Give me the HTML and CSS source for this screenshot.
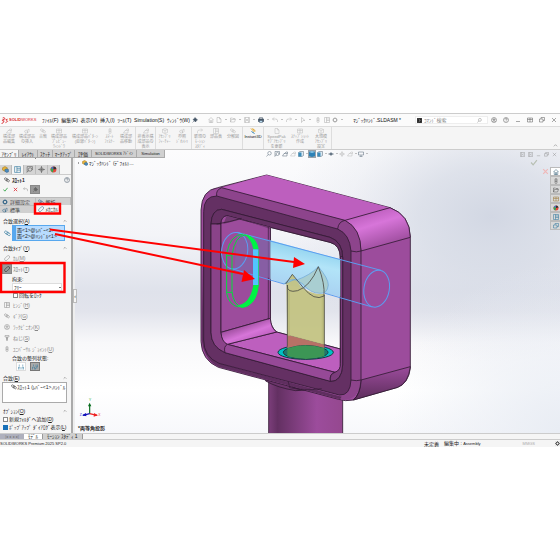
FILE: index.html
```html
<!DOCTYPE html>
<html lang="ja">
<head>
<meta charset="utf-8">
<title>SOLIDWORKS</title>
<link rel="stylesheet" href="styles.css">
</head>
<body>
<svg class="defs" aria-hidden="true">
  <symbol id="home" viewBox="0 0 12 12"><path d="M1 6l5-5 5 5M2.500 5v6h7V5M5 11V7h2v4"/></symbol>
  <symbol id="doc" viewBox="0 0 12 12"><path d="M2 1h5l3 3v7H2zM7 1v3h3"/></symbol>
  <symbol id="open" viewBox="0 0 12 12"><path d="M1 10V2h4l1 1h4v2M1 10l2-5h8l-2 5z"/></symbol>
  <symbol id="save" viewBox="0 0 12 12"><path d="M1 1h10v10H1zM3 1v4h6V1M3 11V7h6v4"/></symbol>
  <symbol id="print" viewBox="0 0 12 12"><path d="M3 4V1h6v3M1 4h10v5H1z"/><path d="M1 4h10v5H1z" fill="currentColor"/><path d="M3 7h6v4H3z" fill="#b9dcf0"/></symbol>
  <symbol id="undo" viewBox="0 0 12 12"><path d="M4 1L1 4l3 3M1 4h6q4 0 4 3v3"/></symbol>
  <symbol id="redo" viewBox="0 0 12 12"><path d="M8 1l3 3-3 3M11 4H5q-4 0-4 3v3"/></symbol>
  <symbol id="cursor" viewBox="0 0 12 12"><path d="M3 1l7 6H6l-3 4z"/></symbol>
  <symbol id="light" viewBox="0 0 12 12"><rect x="4" y="1" width="4" height="10" rx="2"/><path d="M4 4h4M4 7h4"/></symbol>
  <symbol id="list" viewBox="0 0 12 12"><path d="M1 1h10v10H1zM5 1v10M5 4h6M5 7h6"/></symbol>
  <symbol id="gear" viewBox="0 0 12 12"><circle cx="6" cy="6" r="3.500" stroke-width="2"/><path d="M6 0v3M6 9v3M0 6h3M9 6h3M2 2l2 2M8 8l2 2M10 2L8 4M4 8l-2 2"/></symbol>
  <symbol id="mag" viewBox="0 0 12 12"><circle cx="7" cy="4.500" r="3.500"/><path d="M4.500 7L1 11"/></symbol>
  <symbol id="magdoc" viewBox="0 0 12 12"><path d="M2 10V1h9v6"/><circle cx="7" cy="6" r="3"/><path d="M5 8l-4 3"/></symbol>
  <symbol id="part" viewBox="0 0 12 12"><path d="M1 10l3-5h6v5zM5 5l3-3h3v4"/></symbol>
  <symbol id="box" viewBox="0 0 12 12"><path d="M6 1l5 2v6l-5 2-5-2V3zM1 3l5 2 5-2M6 5v6"/></symbol>
  <symbol id="cube" viewBox="0 0 12 12"><path d="M6 0l6 2v8l-6 2-6-2V2z" fill="#2d82b7" stroke="none"/><path d="M6 0l6 2-6 2-6-2z" fill="#8cc7e8" stroke="none"/></symbol>
  <symbol id="cube2" viewBox="0 0 12 12"><path d="M1 3l3-2h7v8l-3 2H1z" fill="#dbe9f2"/><path d="M1 3h6v8H1z" fill="#3c8dbb" stroke="none"/></symbol>
  <symbol id="eye" viewBox="0 0 12 12"><path d="M1 6q5-5 10 0-5 5-10 0z"/><circle cx="6" cy="6" r="2" fill="currentColor"/></symbol>
  <symbol id="ball" viewBox="0 0 12 12"><circle cx="6" cy="6" r="5" fill="#e7473c" stroke="none"/><path d="M6 6V1a5 5 0 0 0-4.500 3z" fill="#3c79d0" stroke="none"/><path d="M6 6L1.500 4A5 5 0 0 0 5 11z" fill="#35a852" stroke="none"/><path d="M6 6l5-1a5 5 0 0 0-5-4z" fill="#333" stroke="none"/></symbol>
  <symbol id="screen" viewBox="0 0 12 12"><path d="M1 2h10v6H1zM6 8v3M3 11h6"/></symbol>
  <symbol id="screw" viewBox="0 0 12 12"><path d="M2 1h8v3H2zM5 4v7h2V4M4 6h4M4 8h4"/></symbol>
  <symbol id="asm" viewBox="0 0 12 12"><path d="M1 3l4-2 4 2v4L5 9 1 7z" fill="#e8b43a" stroke="#a57a1c"/><path d="M5 6l3-1 3 1v4l-3 1-3-2z" fill="#4a8dc0" stroke="#2f6390"/></symbol>
  <symbol id="clip" viewBox="0 0 12 12"><rect x="1" y="2.500" width="7" height="4" rx="2" transform="rotate(40 4 4)"/><rect x="4" y="5" width="7" height="4" rx="2" transform="rotate(40 8 7)"/></symbol>
  <symbol id="slot" viewBox="0 0 12 12"><rect x="0" y="3.500" width="12" height="5.500" rx="2.700" transform="rotate(-45 6 6)"/></symbol>
  <symbol id="cross" viewBox="0 0 12 12"><path d="M2 2l8 8M10 2l-8 8"/></symbol>
  <symbol id="tick" viewBox="0 0 12 12"><path d="M1 6l3.500 4L11 2"/></symbol>
  <symbol id="min" viewBox="0 0 12 12"><path d="M2 9h8"/></symbol>
  <symbol id="grid" viewBox="0 0 12 12"><path d="M1 2h10v8H1zM1 5h10M6 2v8"/></symbol>
  <symbol id="rest" viewBox="0 0 12 12"><path d="M1 4h7v6H1zM4 4V1h7v6H8"/></symbol>
  <symbol id="dock" viewBox="0 0 12 12"><path d="M1 1h10v10H1zM4 1v10M9 4L6 6l3 2"/></symbol>
  <symbol id="user" viewBox="0 0 12 12"><circle cx="6" cy="6" r="5"/><path d="M4 4h4v2H4zM3 9q3-3 6 0"/></symbol>
  <symbol id="help" viewBox="0 0 12 12"><circle cx="6" cy="6" r="5"/><path d="M4 5q0-2 2-2t2 1.500Q8 6 6 6.500V7M6 8.500v1"/></symbol>
  <symbol id="target" viewBox="0 0 12 12"><circle cx="6" cy="6" r="3"/><path d="M6 0v12M0 6h12"/></symbol>
  <symbol id="mate" viewBox="0 0 12 12"><path d="M1 6q4-4 6 0v4H3zM6 5l4-3v5l-3 3z"/></symbol>
  <symbol id="caret" viewBox="0 0 12 12"><path d="M2 8l4-4 4 4"/></symbol>
  <symbol id="pin" viewBox="0 0 12 12"><path d="M6 1l5 5-2 1-2 3-5-5 3-2z" fill="currentColor"/><path d="M4 8l-3 3"/></symbol>
  <symbol id="align" viewBox="0 0 12 12"><path d="M1 11V6h3v5M8 11V6h3v5M2.500 4V1M9.500 4V1"/></symbol>
  <symbol id="anti" viewBox="0 0 12 12"><path d="M1 11V6h4v5M8 1v5h3V1M3 4V1M7 11V8h4"/></symbol>
</svg>

<div class="app">
  <header class="title">
    <div class="logo"><svg viewBox="0 0 18 16"><path d="M4 1l5 2-2 3-4-1M2 8l5 1-3 5-3 1M15 5l-4 1 4 4-5 3"/></svg><b>SOLID</b>WORKS</div>
    <nav class="menu">
      <a href="#">ﾌｧｲﾙ(F)</a><a href="#">編集(E)</a><a href="#">表示(V)</a><a href="#">挿入(I)</a><a href="#">ﾂｰﾙ(T)</a><a href="#">Simulation(S)</a><a href="#">ｳｨﾝﾄﾞｳ(W)</a>
    </nav>
    <div class="quick">
      <button class="ink" aria-label="固定"><svg><use href="#pin"/></svg></button>
      <button aria-label="ホーム"><svg><use href="#home"/></svg></button>
      <button class="more" aria-label="新規"><svg><use href="#doc"/></svg></button>
      <button class="more" aria-label="開く"><svg><use href="#open"/></svg></button>
      <button class="more" aria-label="保存"><svg><use href="#save"/></svg></button>
      <button class="more ink" aria-label="印刷"><svg><use href="#print"/></svg></button>
      <button class="more" aria-label="元に戻す"><svg><use href="#undo"/></svg></button>
      <button class="more" aria-label="やり直し"><svg><use href="#redo"/></svg></button>
      <button class="more" aria-label="選択"><svg><use href="#cursor"/></svg></button>
      <button aria-label="再構築"><svg><use href="#light"/></svg></button>
      <button aria-label="プロパティ"><svg><use href="#list"/></svg></button>
      <button class="more" aria-label="オプション"><svg><use href="#gear"/></svg></button>
    </div>
    <div class="docname">ﾏｼﾞｯｸﾊﾝﾄﾞ.SLDASM *</div>
    <label class="search"><svg class="cmd" viewBox="0 0 12 12"><path d="M0 0h12v12H0z" fill="#222"/><path d="M4 3l4 3-4 3" stroke="#fff"/></svg><input type="text" placeholder="ｺﾏﾝﾄﾞ検索" aria-label="コマンド検索"><svg><use href="#mag"/></svg></label>
    <div class="winbtns">
      <button aria-label="ログイン"><svg><use href="#user"/></svg></button><button aria-label="ヘルプ"><svg><use href="#help"/></svg></button><button aria-label="最小化"><svg><use href="#min"/></svg></button><button aria-label="配置"><svg><use href="#grid"/></svg></button><button aria-label="元のサイズ"><svg><use href="#rest"/></svg></button><button aria-label="閉じる"><svg><use href="#cross"/></svg></button>
    </div>
  </header>

  <div class="ribbon">
    <button><svg><use href="#part"/></svg>構成部<br>品編集</button>
    <button><svg><use href="#mate"/></svg>構成部品<br>の挿入</button>
    <button><svg><use href="#clip"/></svg>合致</button>
    <button><svg><use href="#grid"/></svg>構成部品<br>ﾌﾟﾚﾋﾞｭｰ<br>ｳｨﾝﾄﾞｳ</button>
    <button><svg><use href="#grid"/></svg>構成部品ﾊﾟﾀｰﾝ<br>(直線ﾊﾟﾀｰﾝ)</button>
    <button><svg><use href="#light"/></svg>ｽﾏｰﾄ<br>ﾌｧｽﾅｰ</button>
    <button><svg><use href="#part"/></svg>構成部<br>品移動</button>
    <button class="sep"><svg><use href="#part"/></svg>非表示構<br>成部品の<br>表示</button>
    <button class="sep"><svg><use href="#box"/></svg>ｱｾﾝﾌﾞﾘ<br>ﾌｨｰﾁｬｰ</button>
    <button><svg><use href="#mate"/></svg>参照<br>ｼﾞｵﾒﾄﾘ</button>
    <button class="sep"><svg><use href="#redo"/></svg>新規の<br>ﾓｰｼｮﾝ<br>ｽﾀﾃﾞｨ</button>
    <button><svg><use href="#list"/></svg>部品表</button>
    <button><svg><use href="#clip"/></svg>分解図</button>
    <button class="sep on"><svg viewBox="0 0 12 12"><path d="M2 1l7 7M5 1l6 5" stroke="#e0a020" stroke-width="2"/><path d="M3 7l6 4" stroke="#2c7fae" stroke-width="2"/></svg>Instant3D</button>
    <button class="sep"><svg><use href="#doc"/></svg>SpeedPak<br>ｻﾌﾞｱｾﾝﾌﾞﾘ<br>を更新</button>
    <button><svg><use href="#grid"/></svg>ｽﾅｯﾌﾟｼｮｯﾄ<br>作成</button>
    <button><svg><use href="#box"/></svg>大規模<br>ｱｾﾝﾌﾞﾘ<br>設定</button>
    <span class="sep fold"><svg><use href="#caret"/></svg></span>
  </div>

  <main class="stage">
    <svg class="model" viewBox="0 0 1455 849" preserveAspectRatio="xMinYMin slice" aria-label="3D モデル">
      <defs>
        <linearGradient id="bg" x2="0" y2="1"><stop offset="0" stop-color="#fcfcfd"/><stop offset=".3" stop-color="#f3f4f8"/><stop offset=".5" stop-color="#dfe2eb"/><stop offset=".57" stop-color="#e2e4ec"/><stop offset=".68" stop-color="#f8f8fa"/><stop offset=".85" stop-color="#fff"/><stop offset="1" stop-color="#f7f8fb"/></linearGradient>
        <radialGradient id="haze" gradientUnits="userSpaceOnUse" cx="1250" cy="200" r="620" gradientTransform="translate(0 60) scale(1 .7)"><stop offset="0" stop-color="#d2d7e3"/><stop offset=".35" stop-color="#d5dae5" stop-opacity=".75"/><stop offset=".7" stop-color="#d8dce7" stop-opacity=".25"/><stop offset="1" stop-color="#d8dce7" stop-opacity="0"/></radialGradient>
        <radialGradient id="haze2" gradientUnits="userSpaceOnUse" cx="1455" cy="840" r="500"><stop offset="0" stop-color="#e9edf4"/><stop offset="1" stop-color="#e9edf4" stop-opacity="0"/></radialGradient>
        <linearGradient id="stem"><stop offset="0" stop-color="#7c3e7b"/><stop offset=".12" stop-color="#633062"/><stop offset=".65" stop-color="#9c4c9c"/><stop offset="1" stop-color="#95488f"/></linearGradient>
        <linearGradient id="cornerTop" gradientUnits="userSpaceOnUse" x1="870" y1="190" x2="905" y2="300"><stop offset="0" stop-color="#bd5fbe"/><stop offset=".35" stop-color="#d775d9"/><stop offset="1" stop-color="#9c4c9c"/></linearGradient>
        <linearGradient id="cornerBot" x2="0" y2="1"><stop offset="0" stop-color="#9c4c9c"/><stop offset="1" stop-color="#5c2d5b"/></linearGradient>
        <linearGradient id="floorCorner" gradientUnits="userSpaceOnUse" x1="510" y1="520" x2="530" y2="575"><stop offset="0" stop-color="#9c4c9c"/><stop offset=".55" stop-color="#d775d9"/><stop offset="1" stop-color="#bd5fbe"/></linearGradient>
        <linearGradient id="pinFill" gradientUnits="userSpaceOnUse" x1="700" y1="290" x2="675" y2="415"><stop offset="0" stop-color="#8fd2ee"/><stop offset=".4" stop-color="#b2e4f8"/><stop offset="1" stop-color="#a9d2f2"/></linearGradient>
      </defs>
      <path d="M0 0h1455v849H0z" fill="url(#bg)"/><path d="M0 0h1455v849H0z" fill="url(#haze)"/><path d="M0 0h1455v849H0z" fill="url(#haze2)"/>
      <g stroke="#321a34" stroke-width="2.500" stroke-linejoin="round">
        <path d="M581 680h222v175H581z" fill="url(#stem)"/>
        <path d="M572 675v18q35 20 90 29l70-4v-20z" fill="#6b346a"/>
        <path fill="#9c4c9c" fill-rule="evenodd" d="M378 180Q380 120 428 113L575 75 945 173Q1005 195 1006 262V655Q1000 700 968 712L835 750Q810 755 790 748L430 652Q380 630 378 575ZM586 232L765 277Q796 285 796 320V597L605 546Q586 530 586 505Z"/>
        <path fill="#bd5fbe" stroke="none" d="M440 113L575 75 945 173 810 211Z"/>
        <path fill="url(#cornerTop)" d="M810 211L945 173Q1005 195 1006 262L858 303Q855 240 810 211Z"/>
        <path fill="url(#cornerBot)" d="M858 690L1006 650Q1000 700 968 712L835 750Q858 730 858 690Z"/>
        <path fill="#8d448c" stroke="none" d="M440 113L810 211Q858 235 858 303V690Q855 750 800 750L790 740 828 690V303L790 237 425 138Q425 118 440 113Z"/>
        <path fill="none" d="M440 113L810 211Q858 235 858 303V690Q855 735 835 750M440 113Q422 120 425 138M810 211Q790 215 788 237M828 303Q845 308 858 303M828 690Q845 694 858 690"/>
        <path fill="#5f2e5f" stroke="none" d="M380 560L386 190V560Q392 620 432 640L800 740 795 748 430 650Q382 625 380 560Z"/>
        <path fill="#643063" fill-rule="evenodd" d="M386 185Q386 138 425 138L788 237Q824 252 828 303V690Q826 737 793 735L432 640Q386 620 386 570ZM408 222Q410 178 440 178L585 216 765 262Q803 275 803 325V645Q800 695 768 694L450 608Q408 590 408 547Z"/>
        <path fill="#643063" d="M408 222Q410 178 440 178L765 262Q803 275 803 325H796Q796 285 765 277L586 232 455 197Q438 205 438 222Z"/>
        <path fill="#8a4389" d="M408 222H438V547Q440 570 457 583L450 608Q408 590 408 547Z"/>
        <path fill="#9c4c9c" d="M438 222Q438 200 455 197L586 232V505L438 547Z"/>
        <path fill="#733a73" stroke="none" d="M455 197L586 232V237L500 208 445 222Z"/>
        <path fill="none" d="M425 222q40-6 75-17"/>
        <path fill="#bd5fbe" d="M457 583L605 546 796 597V650Q794 664 780 667Z"/>
        <path fill="url(#floorCorner)" d="M438 547L586 505Q588 535 605 546L457 583Q440 575 438 547Z"/>
        <path fill="#964997" d="M450 608Q445 590 457 583L780 667Q763 670 766 694Z"/>
        <path fill="#7c3c7c" d="M780 667Q798 660 796 640V320H803V645Q800 695 766 694 763 672 780 667Z"/>
        <path fill="none" d="M580 231V508M640 695l4 18 32 6M650 710q30 15 90 6" stroke-width="2"/>
      </g>
      <path fill="#7f67a8" opacity=".7" d="M487 247L586 270V385L478 360z"/>
      <path fill="url(#pinFill)" d="M586 271L796 328V440L750 430 627 402 586 387z"/>
      <ellipse cx="692" cy="607" rx="83" ry="21" fill="#00c1c4" stroke="#17393c" stroke-width="3"/>
      <ellipse cx="692" cy="607" rx="67" ry="19" fill="#20756c" stroke="#17393c" stroke-width="3"/>
      <path fill="#b77166" d="M637 555l111 29v10q-54-18-111 0z"/>
      <path fill="#3c9655" d="M637 595q54-18 111 0v24q-54 16-111 0z"/>
      <path fill="#c3c383" fill-opacity=".95" d="M634 402L652 373 678 410Q710 435 748 432V584L637 555Z"/>
      <path fill="#b5b576" d="M637 420h8v138h-8zM740 432h8v150h-8z" opacity=".6"/>
      <path fill="#a9ced1" stroke="#6ba6d8" stroke-width="2" d="M627 402Q640 385 665 390 705 376 730 350 760 385 760 405 757 432 735 430 705 430 684 402L660 388Z"/>
      <path fill="none" stroke="#4c4c45" stroke-width="2.500" d="M632 402L652 373 684 412Q718 455 747 438 750 400 730 350 705 410 668 422 635 430 637 405M637 405V590M748 435V590"/>
      <g fill="none" stroke="#5b9df0" stroke-width="3"><ellipse cx="479" cy="302" rx="39" ry="55" transform="rotate(8 479 302)"/><ellipse cx="905" cy="416" rx="38" ry="56" transform="rotate(10 905 416)"/><path d="M487 247L918 361M470 356L627 402M750 430L892 471"/></g>
      <g fill="none" stroke="#00df3b" stroke-width="3"><path d="M455 310Q466 253 505 252M455 310V430Q462 465 490 471"/><path d="M471 315Q480 257 510 255 546 260 550 310V405Q540 470 502 472 475 465 471 425ZM455 317h16M455 427h16"/></g>
      <path d="M506 253Q545 258 551 298H535Q530 267 506 253ZM535 405H551Q546 468 500 473L485 467Q525 463 535 405Z" fill="#00f344"/><path d="M534 298h16v107h-16z" fill="#52c4ff"/>
      <g stroke-width="3.500"><path d="M44 791V767" stroke="#076b1c"/><path d="M39 769l5-11 5 11z" fill="#076b1c"/><path d="M44 791l22 5" stroke="#e22"/><path d="M57 789l12 7-13 4z" fill="#e22"/><path d="M44 791l-20 5" stroke="#11b"/><path d="M33 789l-12 7 13 3z" fill="#11b"/></g>
      <g font-size="10" font-family="Liberation Sans, sans-serif"><text x="42" y="753" fill="#2a2">Y</text><text x="70" y="799" fill="#e33">X</text><text x="14" y="799" fill="#22c">Z</text></g>
    </svg>

    <div class="topbar">
      <div class="tabs"><button class="cur">ｱｾﾝﾌﾞﾘ</button><button>ﾚｲｱｳﾄ</button><button>ｽｹｯﾁ</button><button>ﾏｰｸｱｯﾌﾟ</button><button>評価</button><button class="latin">SOLIDWORKS ｱﾄﾞｲﾝ</button><button class="latin">Simulation</button></div>
      <div class="views">
        <button aria-label="ズーム"><svg><use href="#mag"/></svg></button><button aria-label="一部拡大"><svg><use href="#magdoc"/></svg></button><button aria-label="前の表示"><svg><use href="#part"/></svg></button><button class="dim" aria-label="断面"><svg><use href="#part"/></svg></button><button class="more" aria-label="表示方向"><svg><use href="#cube2"/></svg></button><button class="sel" aria-label="シェイディング"><svg><use href="#cube"/></svg></button><button class="more" aria-label="表示スタイル"><svg><use href="#cube2"/></svg></button><button class="more" aria-label="表示/非表示"><svg><use href="#eye"/></svg></button><button class="dim" aria-label="外観"><svg><use href="#target"/></svg></button><button class="more dim" aria-label="シーン"><svg><use href="#part"/></svg></button><button class="more" aria-label="画面"><svg><use href="#screen"/></svg></button>
      </div>
      <div class="docbtns"><button aria-label="左へ"><svg><use href="#dock"/></svg></button><button aria-label="右へ"><svg><use href="#dock"/></svg></button><button aria-label="最小化"><svg><use href="#min"/></svg></button><button aria-label="元のサイズ"><svg><use href="#rest"/></svg></button><button aria-label="閉じる"><svg><use href="#cross"/></svg></button></div>
    </div>

    <div class="work">
      <aside class="panel">
        <div class="grip"></div>
        <div class="ptabs"><button aria-label="ツリー"><svg><use href="#asm"/></svg></button><button class="cur" aria-label="プロパティ"><svg><use href="#list"/></svg></button><button aria-label="コンフィギュレーション"><svg><use href="#magdoc"/></svg></button><button aria-label="寸法"><svg><use href="#target"/></svg></button><button aria-label="表示"><svg><use href="#ball"/></svg></button></div>
        <div class="phead"><svg><use href="#clip"/></svg><b>ｽﾛｯﾄ1</b><button aria-label="ヘルプ"><svg><use href="#help"/></svg></button></div>
        <div class="acts"><button class="ok" aria-label="OK"><svg><use href="#tick"/></svg></button><button class="ng" aria-label="キャンセル"><svg><use href="#cross"/></svg></button><button class="dim" aria-label="元に戻す"><svg><use href="#undo"/></svg></button><button class="press" aria-label="固定"><svg><use href="#pin"/></svg></button></div>
        <div class="modes"><button><svg><use href="#gear"/></svg>詳細設定</button><button><svg><use href="#clip"/></svg>解析</button><button><svg><use href="#mate"/></svg>標準</button><button class="cur"><svg><use href="#slot"/></svg>ﾒｶﾆｶﾙ</button></div>
        <h2>合致選択(<u>A</u>)<svg><use href="#caret"/></svg></h2>
        <div class="pick"><svg><use href="#clip"/></svg><ul><li>面&lt;1&gt;@ﾚﾊﾞｰ&lt;1&gt;</li><li>面&lt;2&gt;@ﾊﾝﾄﾞﾙ&lt;1&gt;</li></ul></div>
        <h2>合致ﾀｲﾌﾟ(<u>Y</u>)<svg><use href="#caret"/></svg></h2>
        <button class="type"><svg><use href="#slot"/></svg>ｶﾑ(<u>M</u>)</button>
        <button class="type cur"><svg><use href="#slot"/></svg>ｽﾛｯﾄ(<u>T</u>)</button>
        <label class="lab" for="cons">拘束:</label>
        <select id="cons"><option>ﾌﾘｰ</option></select>
        <label class="chk in"><input type="checkbox">回転をﾛｯｸ</label>
        <button class="type"><svg><use href="#list"/></svg>ﾋﾝｼﾞ(<u>H</u>)</button>
        <button class="type"><svg><use href="#clip"/></svg>ｷﾞｱ(<u>G</u>)</button>
        <button class="type"><svg><use href="#user"/></svg>ﾗｯｸﾋﾟﾆｵﾝ(<u>K</u>)</button>
        <button class="type"><svg><use href="#screw"/></svg>ねじ(<u>S</u>)</button>
        <button class="type"><svg><use href="#light"/></svg>ﾕﾆﾊﾞｰｻﾙ ｼﾞｮｲﾝﾄ(<u>U</u>)</button>
        <div class="lab low">合致の整列状態:</div>
        <div class="aligns"><button aria-label="同方向"><svg><use href="#align"/></svg></button><button class="cur" aria-label="反対方向"><svg><use href="#anti"/></svg></button></div>
        <h2>合致(<u>E</u>)<svg><use href="#caret"/></svg></h2>
        <div class="mates"><svg><use href="#clip"/></svg>ｽﾛｯﾄ1 (ﾚﾊﾞｰ&lt;1&gt;,ﾊﾝﾄﾞﾙ</div>
        <h2>ｵﾌﾟｼｮﾝ(<u>O</u>)<svg><use href="#caret"/></svg></h2>
        <label class="chk"><input type="checkbox">新規ﾌｫﾙﾀﾞへ追加(<u>D</u>)</label>
        <label class="chk"><input type="checkbox" checked>ﾎﾟｯﾌﾟｱｯﾌﾟ ﾀﾞｲｱﾛｸﾞ表示(<u>L</u>)</label>
      </aside>
      <div class="split"><button aria-label="パネルを閉じる">‹</button></div>
      <div class="canvas">
        <div class="tree"><i></i><svg><use href="#asm"/></svg>ﾏｼﾞｯｸﾊﾝﾄﾞ (ﾃﾞﾌｫﾙﾄ...</div>
        <div class="viewname">*両等角投影</div>
      </div>
      <div class="confirm"><svg class="yes"><use href="#tick"/></svg><svg class="no"><use href="#cross"/></svg></div>
      <div class="tasks"><button aria-label="ホーム"><svg><use href="#home"/></svg></button><button aria-label="ライブラリ"><svg><use href="#light"/></svg></button><button aria-label="エクスプローラ"><svg><use href="#open"/></svg></button><button class="gold" aria-label="パレット"><svg><use href="#grid"/></svg></button><button aria-label="外観"><svg><use href="#ball"/></svg></button><button class="blue" aria-label="プロパティ"><svg><use href="#list"/></svg></button><button class="blue" aria-label="フォーラム"><svg><use href="#rest"/></svg></button></div>
    </div>

    <svg class="marks" viewBox="0 0 560 283" preserveAspectRatio="xMinYMin meet" aria-hidden="true">
      <path d="M50 79.500L294 112M55 84L243 124" stroke-width="2"/>
      <path d="M305 114L293 118 294 107zM255 129L241.500 132 244 120z" fill="#f00" stroke="none"/>
      <path d="M35 54h25v9.500H35zM1 113h63.500v29H1z" stroke-width="2.400"/>
    </svg>
  </main>

  <div class="sheets"><span class="nav">|◂ ◂ ▸ ▸|</span><button class="cur">ﾓﾃﾞﾙ</button><button>ﾓｰｼｮﾝ ｽﾀﾃﾞｨ 1</button></div>
  <footer class="status"><span class="ver">SOLIDWORKS Premium 2025 SP2.0</span><span>未定義</span><span>編集中 : <span class="latin">Assembly</span></span><span class="unit latin">MMGS</span><svg><use href="#gear"/></svg></footer>
</div>
</body>
</html>
```
FILE: styles.css
```css
* { box-sizing: border-box; }
body { margin: 0; padding-top: 113px; background: #fff; color: #222; font: 5px/6px "Liberation Sans", "Noto Sans CJK JP", sans-serif; }
.defs { display: none; }
svg { width: 7px; height: 7px; flex: none; fill: none; stroke: currentColor; stroke-width: 1; }
button, input, select { font: inherit; color: inherit; margin: 0; padding: 0; border: 0; background: none; }
button { display: flex; align-items: center; justify-content: center; white-space: nowrap; }
a { color: inherit; text-decoration: none; }
h2, ul { margin: 0; padding: 0; font: inherit; list-style: none; }
.latin { font-size: 4px; }
.app { border-top: 1px solid #ccc; overflow: hidden; white-space: nowrap; }

.title { display: flex; align-items: center; height: 12px; background: #fbfbfb; }
.logo { display: flex; align-items: center; width: 42px; padding-left: 1px; color: #d9292f; font-size: 4px; }
.logo svg { width: 8px; height: 7px; stroke-width: 2; }
.menu { display: flex; justify-content: space-between; width: 148px; color: #111; }
.quick { display: flex; margin-left: 2px; color: #aaa; }
.quick button { width: 9px; }
.quick button:first-child { width: 14px; justify-content: flex-start; }
.quick svg { width: 6px; height: 6px; }
.quick .ink { color: #456; }
.more::after { content: ""; width: 0; margin-left: 2px; border: 1px solid transparent; border-top-color: #888; }
.quick .more { width: 14px; padding-left: 1px; justify-content: flex-start; }
.quick .more::after { margin-left: 3px; }
.docname { margin-left: auto; margin-right: 14px; color: #111; }
.search { display: flex; align-items: center; width: 73px; height: 8px; padding: 0 5px 0 1px; background: #fff; border: 1px solid #eee; color: #777; }
.search input { flex: 1; min-width: 0; height: 6px; padding-left: 2px; outline: 0; }
.search input::placeholder { color: #888; }
.search svg { width: 5px; height: 5px; }
.winbtns { display: flex; color: #555; }
.winbtns button { width: 12px; }
.winbtns svg { width: 6px; height: 6px; }

.ribbon { display: grid; grid-template-columns: 18px 18px 14px 18px 34px 15px 18px 20px 18px 18px 17px 16px 18px 21px 26px 22px 20px 1fr; height: 24px; background: #f5f5f5; border-top: 1px solid #ddd; border-bottom: 1px solid #ccc; font-size: 4px; line-height: 5px; color: #999; }
.ribbon button { flex-direction: column; justify-content: flex-start; padding-top: 1px; text-align: center; }
.ribbon svg { width: 6px; height: 6px; color: #bbb; }
.ribbon .sep { border-left: 1px solid #ddd; }
.ribbon .on { color: #111; }
.fold { display: flex; justify-content: flex-end; align-items: flex-end; }
.ribbon .fold svg { width: 5px; height: 5px; margin: 1px 2px; color: #555; }

.stage { position: relative; }
.model { position: absolute; left: 75px; top: 0; width: calc(100% - 75px); height: 100%; stroke: none; }
.marks { position: absolute; left: 0; top: 0; width: 100%; height: 100%; stroke: #f00; pointer-events: none; }
.topbar { position: relative; display: flex; align-items: center; height: 8px; }
.tabs { display: grid; grid-template-columns: 19px 19px 15px 22px 17px 45px 28px; width: 265px; height: 8px; }
.tabs button { background: #d0d0d0; border: solid #aaa; border-width: 0 1px 1px 0; }
.tabs .cur { background: #f5f5f5; }
.views { display: flex; color: #567; }
.views button { width: 8px; height: 8px; }
.views svg { width: 6px; height: 6px; }
.views .more { width: 11px; }
.views .sel { background: #9aa3aa; }
.dim, .views .dim { color: #bbb; }
.docbtns { display: flex; margin-left: auto; margin-right: 2px; color: #888; }
.docbtns button { width: 8px; }
.docbtns svg { width: 5px; height: 5px; }

.work { position: relative; display: flex; }
.panel { width: 73px; padding-bottom: 2px; background: #f5f5f5; border-right: 2px solid #aaa; overflow: hidden; }
.grip { height: 7px; }
.grip::after { content: ""; display: block; width: 1px; height: 1px; margin: 0 auto; background: #888; }
.ptabs { display: flex; height: 10px; border-bottom: 1px solid #ccc; }
.ptabs button { width: 12px; background: #d4d4d4; border-right: 1px solid #bbb; color: #555; }
.ptabs .cur { background: #f5f5f5; color: #27739b; }
.phead { display: flex; align-items: center; height: 10px; padding: 0 1px 0 4px; gap: 2px; }
.phead button { margin-left: auto; color: #456; }
.phead svg { width: 6px; height: 6px; }
.acts { display: flex; height: 9px; margin-bottom: 3px; }
.acts button { width: 10px; }
.acts svg { width: 5px; height: 5px; stroke-width: 2; }
.ok { color: #27a03b; }
.ng { color: #e0313a; }
.press { background: #999; color: #666; border: 1px solid #888; }
.modes { display: grid; grid-template-columns: 1fr 1fr; grid-auto-rows: 8px; margin-bottom: 4px; color: #444; }
.modes button { justify-content: flex-start; padding-left: 2px; background: #d0d0d0; border: solid #bbb; border-width: 1px 1px 0 0; }
.modes svg { width: 6px; height: 6px; margin-right: 2px; color: #368; }
.modes .cur { background: #f5f5f5; border: 0; }
h2 { display: flex; align-items: center; height: 8px; padding: 0 4px 0 3px; }
h2 svg { width: 4px; height: 4px; margin-left: auto; }
.pick { display: flex; align-items: center; padding-left: 4px; margin-bottom: 3px; color: #27739b; }
.pick ul { width: 53px; height: 16px; margin-left: 1px; padding: 1px 0 0 1px; background: #b8dcff; border: 1px solid #58a8ee; border-left-width: 4px; color: #222; }
.type { justify-content: flex-start; height: 11px; padding-left: 3px; color: #888; }
.type svg { width: 8px; height: 8px; padding: 1px; margin-right: 2px; }
.type.cur { color: #666; }
.type.cur svg { background: #999; color: #222; outline: 1px solid #888; }
.lab { display: block; height: 9px; padding: 2px 0 0 12px; }
.low { height: 8px; padding-top: 1px; }
select { display: block; appearance: none; width: 50px; height: 8px; margin-left: 12px; padding-left: 1px; background: #fff linear-gradient(#777, #777) 46px 3px / 2px 1px no-repeat; border: 1px solid #ddd; }
.chk { display: flex; align-items: center; height: 8px; padding-left: 3px; }
.in { padding-left: 13px; }
input[type=checkbox] { appearance: none; width: 5px; height: 5px; margin-right: 1px; background: #fff; border: 1px solid #888; }
input[type=checkbox]:checked { background: #1770b8; border-color: #1770b8; }
.aligns { display: flex; gap: 4px; height: 9px; margin: 0 0 3px 16px; color: #27739b; }
.aligns button { width: 10px; border: 1px solid #ddd; background: #fff; }
.aligns .cur { background: #aaa; border-color: #777; }
.aligns svg { width: 6px; height: 6px; }
.mates { display: flex; height: 21px; margin: 0 4px 4px 2px; padding: 1px 0 0 8px; background: #fff; border: 1px solid #aaa; overflow: hidden; }
.mates svg { width: 6px; height: 6px; }
.split { display: flex; align-items: center; width: 5px; background: linear-gradient(90deg, #eee 2px, transparent 2px); }
.split button { width: 4px; height: 14px; background: #f5f5f5; border: 1px solid #bbb; }
.canvas { flex: 1; display: flex; flex-direction: column; justify-content: space-between; padding: 1px 0 0; }
.tree { display: flex; align-items: center; height: 8px; }
.tree svg { width: 6px; height: 6px; margin-right: 1px; }
.tree i { width: 4px; }
.tree i::after { content: ""; display: block; border: 1px solid transparent; border-left-color: #444; width: 0; }
.viewname { font-weight: bold; height: 8px; }
.confirm { display: flex; padding-top: 1px; }
.confirm svg { stroke-width: 2; }
.yes { color: #b7bfb2; width: 8px; margin-right: 4px; }
.no { color: #efb8b8; margin-top: 9px; }
.tasks { margin-top: 9px; color: #555; }
.tasks button { width: 10px; height: 9px; margin-left: 1px; background: #d8d8d8; border: 1px solid #bbb; border-right: 0; }
.tasks button:first-child { background: #fff; color: #27556f; }
.tasks svg { width: 6px; height: 6px; }
.tasks .gold { color: #9a7430; }
.tasks .blue { color: #27739b; }

.sheets { display: flex; height: 7px; background: #f5f5f5; border: 1px solid #ccc; border-width: 1px 0; }
.sheets .nav { width: 24px; background: #aeb0bd; color: #777; font-size: 4px; line-height: 5px; text-align: center; }
.sheets button { padding: 0 4px; background: #d0d0d0; border-right: 1px solid #999; line-height: 5px; }
.sheets .cur { background: #fff; }
.status { display: flex; align-items: center; height: 7px; gap: 5px; background: #f5f5f5; }
.ver { margin-right: auto; font-size: 4px; }
.unit { margin: 0 15px 0 37px; color: #aaa; }
.status svg { width: 5px; height: 5px; }
```
